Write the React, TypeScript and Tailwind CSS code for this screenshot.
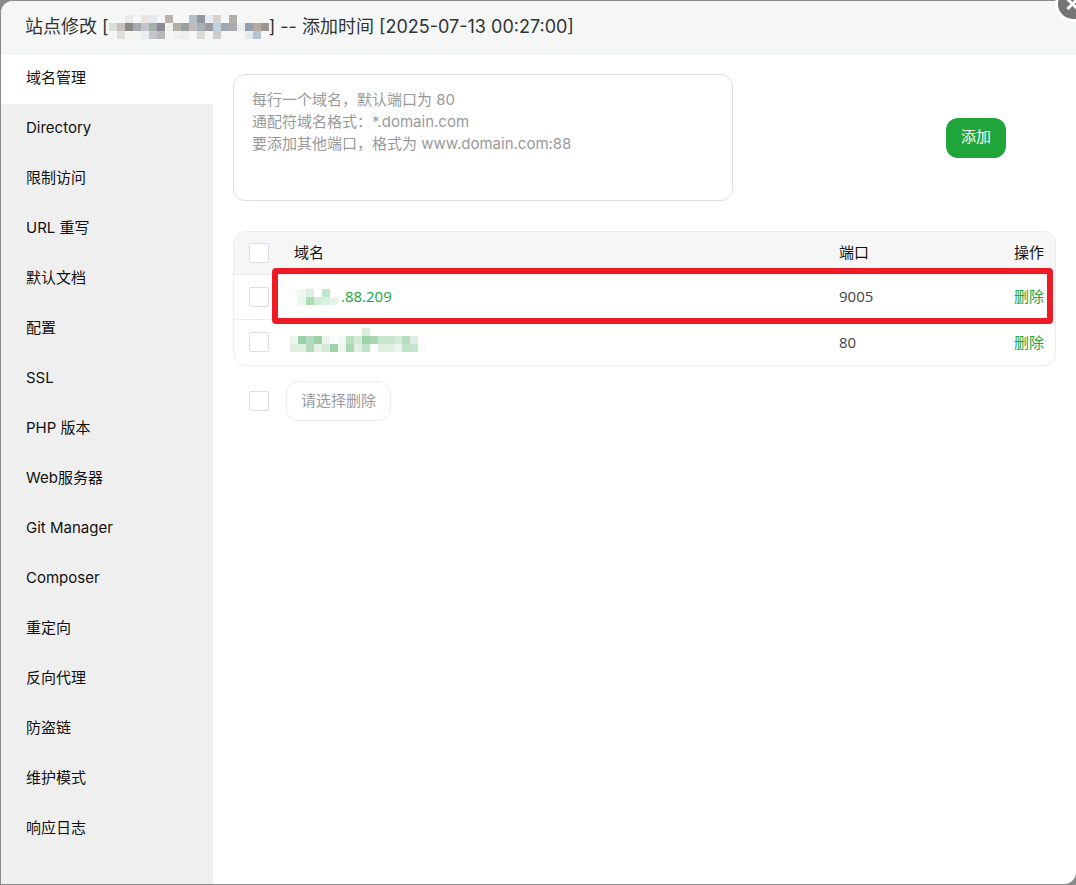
import { useState } from "react";

const menuItems = [
  "域名管理",
  "Directory",
  "限制访问",
  "URL 重写",
  "默认文档",
  "配置",
  "SSL",
  "PHP 版本",
  "Web服务器",
  "Git Manager",
  "Composer",
  "重定向",
  "反向代理",
  "防盗链",
  "维护模式",
  "响应日志",
];

const placeholder = `每行一个域名，默认端口为 80
通配符域名格式：*.domain.com
要添加其他端口，格式为 www.domain.com:88`;

type Cell = string | null;

// each row is a list of 8px blocks, null leaves the block empty
const siteMask: Cell[][] = [
  [null, null, "#eaeaea", null, "#e8e5e0", "#e8ebee", null, "#bcb3b0", null, null, "#b5bdc8", "#8e96a2", "#e8ecf0", "#d6d3ce", null, "#b0afaa"],
  ["#d8dfd4", "#c9c0ba", "#898888", "#a6a9ae", "#bfc5c7", "#a8adb0", "#8c8a92", "#f0f1ef", "#b0b0a8", "#9b9fa3", "#bfbdb8", "#a9afb6", "#9e9a9c", "#c2d2e2", "#a2a8ae", "#a8aaad", "#eaf0f0", "#93a0ac", "#b8ab9c", "#9c948e"],
  [null, "#e0dfdd", "#f6f6f0", null, "#e8eff2", "#c6c6cb", "#b8b7bc", null, "#f0f1ef", "#eceeee", null, "#dadad5", null, "#d0cdc8", null, null, null, "#e4e8e8", "#b5c4d4"],
];

const ipMask: Cell[][] = [
  ["#fafbfb", "#f1f9f3", "#dbf0e0", null, "#bfe5c8"],
  [null, "#e8f5eb", "#aaddb6", "#d0ecd6", "#d9f0de", "#e3f4e6"],
];

const domainMask: Cell[][] = [
  [null, null, null, null, null, null, null, null, null, "#daeede"],
  ["#edf7ef", "#9dd2a8", "#b4dcbc", "#9dd2a8", "#ecf6ee", null, "#f1f9f3", "#bbdfc3", "#d4ebd8", "#9dd2a8", "#a8d6b2", "#c8e6ce", "#c8e6ce", "#d2ebd7", "#b6ddbe", "#deefe1"],
  ["#deefe1", "#dff0e3", "#b4dcbc", "#e2f2e5", "#d2ebd7", "#9dd2a8", "#edf7ef", "#acd8b5", "#dff0e3", "#c0e2c8", null, "#dff0e3", "#dff0e3", "#eaf5ec", "#c0e2c8", "#c4e4cb", "#f8fbf8"],
];

function Mosaic({ rows, cols }: { rows: Cell[][]; cols: number }) {
  return (
    <svg width={cols * 8} height={rows.length * 8} shapeRendering="crispEdges" aria-hidden="true" className="shrink-0">
      {rows.map((row, y) =>
        row.map((fill, x) => fill && <rect key={`${x}-${y}`} x={x * 8} y={y * 8} width="8" height="8" fill={fill} />)
      )}
    </svg>
  );
}

function Checkbox({ label }: { label: string }) {
  return (
    <input
      type="checkbox"
      aria-label={label}
      className="block size-5 appearance-none rounded-xs border border-[#dcdee6] bg-white checked:border-[#20a53a] checked:bg-[#20a53a]"
    />
  );
}

export default function App() {
  const [active, setActive] = useState(0);

  return (
    <div className="flex min-h-screen overflow-hidden bg-[#8a8a8a] py-px pl-px font-[Inter,'Noto_Sans_CJK_SC',sans-serif] text-[15px] text-[#111]">
      <div className="relative flex flex-1 flex-col rounded-tl-xl rounded-br-xl bg-white">
        <header className="flex h-[53px] items-center rounded-tl-xl border-b border-[#ebedee] bg-[#f5f7f7] px-6">
          <h1 className="flex items-center whitespace-pre text-lg text-[#333]">
            站点修改 [<Mosaic rows={siteMask} cols={20} />] -- 添加时间 [2025-07-13 00:27:00]
          </h1>
        </header>
        <button type="button" aria-label="关闭" className="absolute -top-[15px] -right-[15px] rounded-full">
          <svg width="36" height="36" viewBox="0 0 36 36">
            <circle cx="18" cy="18" r="16.5" fill="#757575" stroke="#fff" strokeWidth="3" />
            <path d="M12.5 13l10 10M22.5 13l-10 10" stroke="#fff" strokeWidth="3" />
          </svg>
        </button>

        <div className="flex flex-1">
          <nav className="flex w-[212px] shrink-0 flex-col bg-[#efefef]">
            {menuItems.map((item, i) => (
              <button
                key={item}
                type="button"
                onClick={() => setActive(i)}
                className={`h-[50px] px-[25px] pb-0.5 text-left ${i === active ? "bg-white" : ""}`}
              >
                {item}
              </button>
            ))}
          </nav>

          <main className="min-w-0 flex-1 p-5">
            <div className="flex items-center justify-between pr-[50px]">
              <textarea
                aria-label="域名"
                placeholder={placeholder}
                className="block h-[127px] w-[500px] resize-none rounded-xl border border-[#dcdee6] px-[18px] py-3.5 leading-[22px] outline-none placeholder:text-[#999]"
              />
              <button type="button" className="h-10 w-[60px] rounded-xl bg-[#20a53a] text-white">
                添加
              </button>
            </div>

            <div className="relative mt-[30px]">
              <div className="overflow-hidden rounded-xl border border-[#ebebf3]">
                <table className="w-full text-left">
                  <thead className="bg-[#f6f6f6]">
                    <tr className="h-[42px] border-b border-[#ebebf3]">
                      <th className="w-[60px] pl-[15px]">
                        <Checkbox label="全选" />
                      </th>
                      <th className="font-normal">域名</th>
                      <th className="w-[120px] font-normal">端口</th>
                      <th className="w-24 pr-[11px] text-right font-normal">操作</th>
                    </tr>
                  </thead>
                  <tbody className="font-['Open_Sans','Noto_Sans_CJK_SC',sans-serif] text-[#444]">
                    <tr className="h-[45px] border-b border-[#ebebf3]">
                      <td className="pl-[15px]">
                        <Checkbox label="选择 .88.209" />
                      </td>
                      <td>
                        <a href="#" className="-ml-1 flex items-center text-[#20a53a]">
                          <Mosaic rows={ipMask} cols={6} />
                          <span className="ml-[3px]">.88.209</span>
                        </a>
                      </td>
                      <td>9005</td>
                      <td className="pr-[11px] text-right">
                        <button type="button" className="text-[#20a53a]">删除</button>
                      </td>
                    </tr>
                    <tr className="h-[46px]">
                      <td className="pl-[15px]">
                        <Checkbox label="选择域名" />
                      </td>
                      <td>
                        <a href="#" aria-label="域名" className="-ml-1 block pb-1">
                          <Mosaic rows={domainMask} cols={17} />
                        </a>
                      </td>
                      <td>80</td>
                      <td className="pr-[11px] text-right">
                        <button type="button" className="text-[#20a53a]">删除</button>
                      </td>
                    </tr>
                  </tbody>
                </table>
              </div>
              <div className="pointer-events-none absolute top-[37px] right-[3px] left-[39px] h-14 rounded-sm border-6 border-[#ed1c24]" />
            </div>

            <div className="mt-[15px] flex items-center gap-[17px] pl-4">
              <Checkbox label="全选域名" />
              <button type="button" disabled className="h-10 rounded-xl border border-[#ebebf3] px-3.5 text-[#999ba0]">
                请选择删除
              </button>
            </div>
          </main>
        </div>
      </div>
    </div>
  );
}
